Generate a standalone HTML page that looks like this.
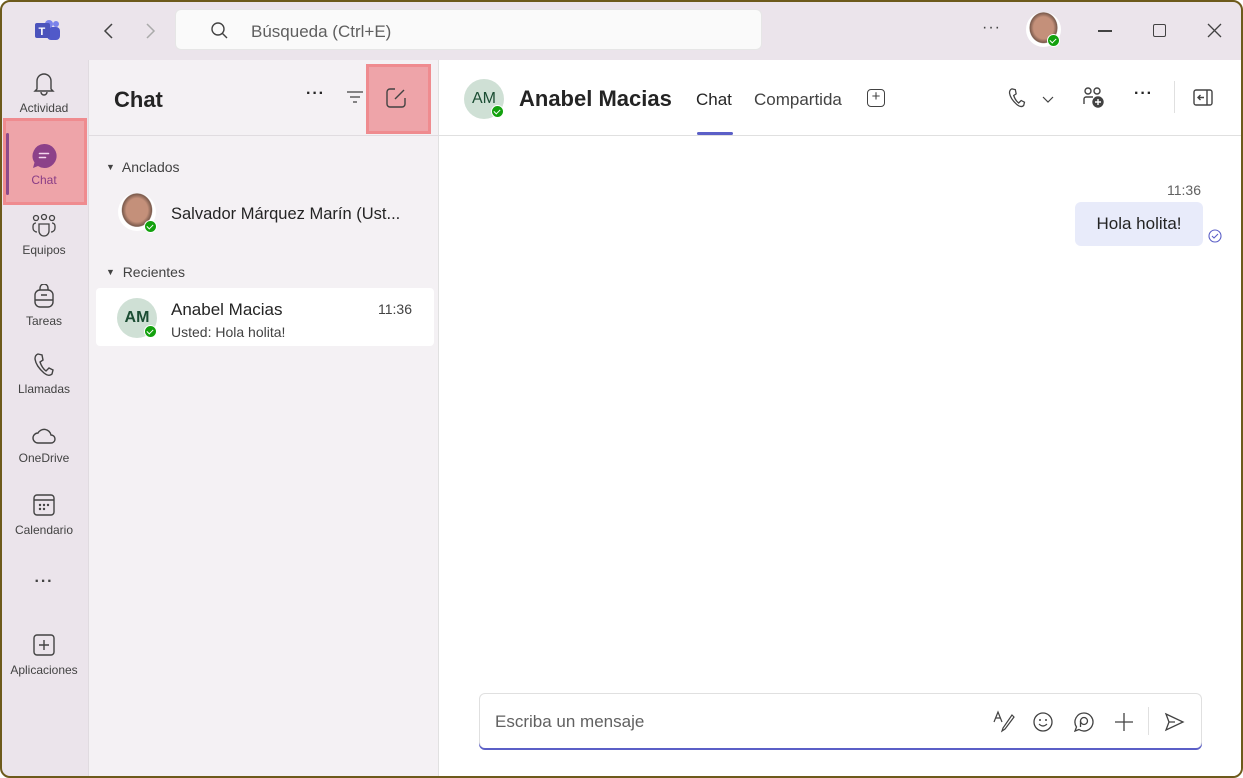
<!DOCTYPE html>
<html><head><meta charset="utf-8"><style>
*{box-sizing:border-box;margin:0;padding:0}
body{width:1243px;height:778px;overflow:hidden;font-family:"Liberation Sans",sans-serif;background:#fff;position:relative;color:#242424}
.win{position:absolute;left:0;top:0;width:1243px;height:778px;border:2px solid #6d5a1b;border-radius:10px;overflow:hidden;background:#ebe4eb}
.abs{position:absolute}
.rail .it{position:absolute;left:-1px;width:86px;text-align:center;font-size:12px;color:#424242}
.rail svg{display:block;margin:0 auto 4px}
.list{position:absolute;left:86px;top:58px;width:351px;height:720px;background:#f4f1f4;border-left:1px solid #e0dbe0;border-right:1px solid #e1e1e1}
.main{position:absolute;left:437px;top:58px;width:806px;height:720px;background:#fff}
.dot{position:absolute;width:13px;height:13px;border-radius:50%;background:#13a10e;border:1.5px solid #fff}
.dot:after{content:"";position:absolute;left:3px;top:2px;width:3px;height:5px;border:solid #fff;border-width:0 1.5px 1.5px 0;transform:rotate(45deg)}
.face{position:absolute;border-radius:50%}
</style></head><body>
<div class="win">
<svg class="abs" style="left:32px;top:17px" width="28" height="24" viewBox="0 0 28 24"><circle cx="22" cy="5" r="3" fill="#7b83eb"/><rect x="13" y="8" width="13" height="13" rx="4" fill="#5059c9"/><circle cx="15" cy="5" r="4" fill="#7b83eb"/><rect x="1" y="4" width="15" height="15" rx="2" fill="#4b53bc"/><text x="4.5" y="16" font-size="11" font-weight="bold" fill="#fff" font-family="Liberation Sans">T</text></svg>
<svg class="abs" style="left:99px;top:19px" width="16" height="20"><path d="M11 3 L4 10 L11 17" stroke="#424242" stroke-width="1.5" fill="none"/></svg>
<svg class="abs" style="left:140px;top:19px" width="16" height="20"><path d="M5 3 L12 10 L5 17" stroke="#aaa" stroke-width="1.5" fill="none"/></svg>
<div class="abs" style="left:173px;top:7px;width:587px;height:41px;background:#fafafa;border-radius:6px;border:1px solid #e6e6e6"></div>
<svg class="abs" style="left:208px;top:19px" width="20" height="20"><circle cx="8" cy="8" r="6" stroke="#424242" stroke-width="1.4" fill="none"/><path d="M12.5 12.5 L17 17" stroke="#424242" stroke-width="1.4"/></svg>
<div class="abs" style="left:249px;top:20px;font-size:17px;color:#5f5f5f">Búsqueda (Ctrl+E)</div>
<div class="abs" style="left:980px;top:17px;font-size:16px;color:#424242;letter-spacing:1px">···</div>
<div class="face" style="left:1024px;top:10px;width:35px;height:35px;background:radial-gradient(ellipse at 50% 45%,#c4907a 0 40%,#7a5a4c 55%,#fff 58%)"></div>
<div class="dot" style="left:1045px;top:32px"></div>
<div class="abs" style="left:1096px;top:28px;width:14px;height:1.5px;background:#424242"></div>
<div class="abs" style="left:1151px;top:22px;width:13px;height:13px;border:1.3px solid #424242;border-radius:2px"></div>
<svg class="abs" style="left:1204px;top:20px" width="17" height="17"><path d="M2 2L15 15M15 2L2 15" stroke="#424242" stroke-width="1.3"/></svg>

<div class="rail">
<div class="it" style="top:69px"><svg width="24" height="26" viewBox="0 0 24 26"><path d="M5 18 V10 a7 7 0 0 1 14 0 V18 L21 20 H3 Z" fill="none" stroke="#424242" stroke-width="1.4"/><path d="M9 21 a3 3 0 0 0 6 0" fill="none" stroke="#424242" stroke-width="1.4"/></svg>Actividad</div>
<div class="abs" style="left:1px;top:116px;width:84px;height:87px;background:#eea4a9;border:3px solid #ef8b8f"></div>
<div class="abs" style="left:4px;top:131px;width:3px;height:62px;background:#8b4a8b;border-radius:2px"></div>
<div class="it" style="top:141px;color:#8a3d86"><svg width="26" height="26" viewBox="0 0 26 26"><path d="M13 1 a12 12 0 1 1 -6 22 L2 25 L3.5 19.5 A12 12 0 0 1 13 1Z" fill="#8c4189"/><path d="M8.5 10.5h9M8.5 14.5h6" stroke="#f3d6ee" stroke-width="1.6" stroke-linecap="round"/></svg>Chat</div>
<div class="it" style="top:211px"><svg width="26" height="26" viewBox="0 0 26 26" fill="none" stroke="#424242" stroke-width="1.3"><circle cx="5" cy="5" r="2.5"/><circle cx="13" cy="4" r="2.5"/><circle cx="21" cy="5" r="2.5"/><path d="M8 11h10v7a5 5 0 0 1-10 0z"/><path d="M5 10a3 3 0 0 0-3 3v2a4 4 0 0 0 4 4M21 10a3 3 0 0 1 3 3v2a4 4 0 0 1-4 4"/></svg>Equipos</div>
<div class="it" style="top:282px"><svg width="24" height="26" viewBox="0 0 24 26" fill="none" stroke="#424242" stroke-width="1.4"><rect x="3" y="6" width="18" height="17" rx="5"/><path d="M8 6V4a4 4 0 0 1 8 0v2"/><path d="M3 16h18M9 11h6"/></svg>Tareas</div>
<div class="it" style="top:350px"><svg width="24" height="26" viewBox="0 0 24 26" fill="none" stroke="#424242" stroke-width="1.4"><path d="M6 2 L10 3 L11 8 L8 10 Q10 16 14 19 L17 16 L21 18 L20 22 Q17 25 12 21 Q4 14 3 7 Q3 3 6 2Z"/></svg>Llamadas</div>
<div class="it" style="top:423px"><svg width="26" height="22" viewBox="0 0 26 22" fill="none" stroke="#424242" stroke-width="1.4"><path d="M7 18 a5 5 0 0 1 0-10 a7 7 0 0 1 13 2 a4 4 0 0 1 0 8 Z"/></svg>OneDrive</div>
<div class="it" style="top:491px"><svg width="24" height="26" viewBox="0 0 24 26" fill="none" stroke="#424242" stroke-width="1.4"><rect x="2" y="2" width="20" height="20" rx="3"/><path d="M2 7h20"/><g fill="#424242" stroke="none"><circle cx="8" cy="12" r="1.2"/><circle cx="12" cy="12" r="1.2"/><circle cx="16" cy="12" r="1.2"/><circle cx="8" cy="16" r="1.2"/><circle cx="12" cy="16" r="1.2"/></g></svg>Calendario</div>
<div class="it" style="top:571px;font-size:16px;letter-spacing:1px;font-weight:bold">···</div>
<div class="it" style="top:631px"><svg width="24" height="26" viewBox="0 0 24 26" fill="none" stroke="#424242" stroke-width="1.4"><rect x="2" y="2" width="20" height="20" rx="3"/><path d="M12 7v10M7 12h10"/></svg>Aplicaciones</div>
</div>

<div class="list">
<div class="abs" style="left:25px;top:27px;font-size:22px;font-weight:bold;color:#242424">Chat</div>
<div class="abs" style="left:217px;top:25px;font-size:16px;letter-spacing:1px;font-weight:bold">···</div>
<svg class="abs" style="left:256px;top:29px" width="20" height="16"><path d="M2 3h16M5 8h10M8 13h4" stroke="#424242" stroke-width="1.3"/></svg>
<div class="abs" style="left:277px;top:4px;width:65px;height:70px;background:#eea4a9;border:3px solid #ef8b8f"></div>
<svg class="abs" style="left:296px;top:27px" width="22" height="22" viewBox="0 0 22 22" fill="none" stroke="#424242" stroke-width="1.4"><path d="M10 2H5a3 3 0 0 0-3 3v12a3 3 0 0 0 3 3h12a3 3 0 0 0 3-3v-6"/><path d="M19 3L10 12"/></svg>
<div class="abs" style="left:0;top:75px;width:350px;height:1px;background:#e0dce0"></div>
<div class="abs" style="left:17px;top:99px;font-size:14px;color:#424242"><span style="font-size:9px;vertical-align:2px">▼</span>&nbsp; Anclados</div>
<div class="face" style="left:29px;top:133px;width:38px;height:38px;background:radial-gradient(ellipse at 50% 45%,#c4907a 0 40%,#7a5a4c 55%,#fff 58%)"></div>
<div class="dot" style="left:55px;top:160px"></div>
<div class="abs" style="left:82px;top:145px;font-size:16.5px;color:#242424">Salvador Márquez Marín (Ust...</div>
<div class="abs" style="left:17px;top:204px;font-size:14px;color:#424242"><span style="font-size:9px;vertical-align:2px">▼</span>&nbsp; Recientes</div>
<div class="abs" style="left:7px;top:228px;width:338px;height:58px;background:#fff;border-radius:4px"></div>
<div class="abs" style="left:28px;top:238px;width:40px;height:40px;border-radius:50%;background:#cfe0d5;color:#1b4d33;font-size:16px;font-weight:bold;text-align:center;line-height:40px">AM</div>
<div class="dot" style="left:55px;top:265px"></div>
<div class="abs" style="left:82px;top:240px;font-size:17px;color:#242424">Anabel Macias</div>
<div class="abs" style="left:82px;top:264px;font-size:14px;color:#424242">Usted: Hola holita!</div>
<div class="abs" style="left:289px;top:241px;font-size:14px;color:#424242">11:36</div>
</div>

<div class="main">
<div class="abs" style="left:25px;top:19px;width:40px;height:40px;border-radius:50%;background:#cfe0d5;color:#1b4d33;font-size:16px;text-align:center;line-height:40px">AM</div>
<div class="dot" style="left:52px;top:45px"></div>
<div class="abs" style="left:80px;top:26px;font-size:22px;font-weight:bold">Anabel Macias</div>
<div class="abs" style="left:257px;top:30px;font-size:17px;color:#242424">Chat</div>
<div class="abs" style="left:258px;top:72px;width:36px;height:3px;background:#5b5fc7;border-radius:2px"></div>
<div class="abs" style="left:315px;top:30px;font-size:17px;color:#424242">Compartida</div>
<div class="abs" style="left:428px;top:29px;width:18px;height:18px;border:1.4px solid #424242;border-radius:4px;font-size:15px;line-height:14px;text-align:center;color:#424242">+</div>
<svg class="abs" style="left:568px;top:27px" width="20" height="22" viewBox="0 0 24 26" fill="none" stroke="#424242" stroke-width="1.5"><path d="M6 2 L10 3 L11 8 L8 10 Q10 16 14 19 L17 16 L21 18 L20 22 Q17 25 12 21 Q4 14 3 7 Q3 3 6 2Z"/></svg>
<svg class="abs" style="left:602px;top:35px" width="14" height="10"><path d="M2 2L7 7L12 2" stroke="#424242" stroke-width="1.2" fill="none"/></svg>
<svg class="abs" style="left:643px;top:26px" width="24" height="24" viewBox="0 0 24 24" fill="none" stroke="#424242" stroke-width="1.4"><circle cx="6" cy="5" r="3"/><circle cx="15" cy="5" r="3"/><path d="M2 18v-5a2 2 0 0 1 2-2h7"/><circle cx="16" cy="16" r="5" fill="#424242"/><path d="M16 13v6M13 16h6" stroke="#fff"/></svg>
<div class="abs" style="left:695px;top:25px;font-size:16px;letter-spacing:1px;font-weight:bold">···</div>
<div class="abs" style="left:735px;top:21px;width:1px;height:32px;background:#e0e0e0"></div>
<svg class="abs" style="left:753px;top:28px" width="22" height="20" viewBox="0 0 22 20" fill="none" stroke="#424242" stroke-width="1.4"><rect x="2" y="2" width="18" height="15" rx="2"/><path d="M15 2v15M12 9.5H6M8.5 7l-2.5 2.5L8.5 12"/></svg>
<div class="abs" style="left:0;top:75px;width:806px;height:1px;background:#e0e0e0"></div>
<div class="abs" style="left:728px;top:122px;font-size:14px;color:#616161">11:36</div>
<div class="abs" style="left:636px;top:142px;width:128px;height:44px;background:#e8ebfa;border-radius:6px;font-size:17px;text-align:center;line-height:44px;color:#242424">Hola holita!</div>
<svg class="abs" style="left:769px;top:169px" width="14" height="14"><circle cx="7" cy="7" r="6" stroke="#5b5fc7" stroke-width="1.1" fill="none"/><path d="M4 7l2 2 4-4" stroke="#5b5fc7" stroke-width="1.1" fill="none"/></svg>
<div class="abs" style="left:40px;top:633px;width:723px;height:55px;background:#fff;border:1px solid #e0e0e0;border-bottom:none;border-radius:6px;box-shadow:0 2px 0 #5b5fc7"></div>
<div class="abs" style="left:56px;top:652px;font-size:17px;color:#616161">Escriba un mensaje</div>
<svg class="abs" style="left:553px;top:650px" width="24" height="24" fill="none" stroke="#424242" stroke-width="1.2"><path d="M2 12L6 2L10 12M3.5 8h5"/><path d="M20 5L11 18L10 21L13 19L22 7Z"/></svg>
<svg class="abs" style="left:593px;top:651px" width="22" height="22"><circle cx="11" cy="11" r="9" stroke="#424242" stroke-width="1.3" fill="none"/><circle cx="8" cy="9" r="1" fill="#424242"/><circle cx="14" cy="9" r="1" fill="#424242"/><path d="M7 13q4 4 8 0" stroke="#424242" stroke-width="1.2" fill="none"/></svg>
<svg class="abs" style="left:634px;top:651px" width="22" height="22" fill="none" stroke="#424242" stroke-width="1.3"><path d="M11 2a9 9 0 1 1-5 16.5L2 20l1.5-4A9 9 0 0 1 11 2z"/><circle cx="11" cy="10" r="3.5"/><path d="M7.5 10v6"/></svg>
<svg class="abs" style="left:674px;top:651px" width="22" height="22"><path d="M11 2v18M2 11h18" stroke="#424242" stroke-width="1.3"/></svg>
<div class="abs" style="left:709px;top:647px;width:1px;height:28px;background:#e0e0e0"></div>
<svg class="abs" style="left:724px;top:651px" width="22" height="22" fill="none" stroke="#424242" stroke-width="1.3"><path d="M3 3L20 11L3 19L6 11Z M6 11H12"/></svg>
</div>
</div>
</body></html>
